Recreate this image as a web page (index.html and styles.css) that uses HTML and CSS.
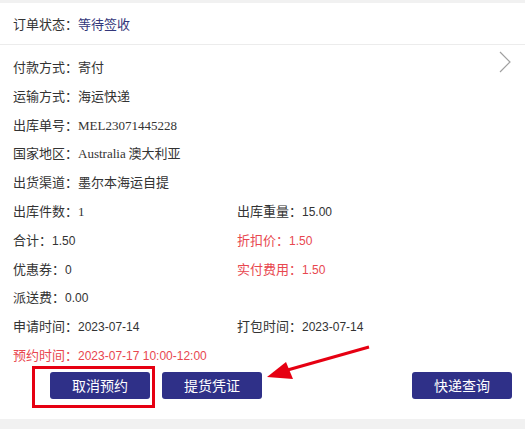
FILE: index.html
```html
<!DOCTYPE html>
<html lang="zh-CN">
<head>
  <meta charset="UTF-8">
  <meta name="viewport" content="width=device-width, initial-scale=1.0">
  <title>订单详情</title>
  <link rel="stylesheet" href="styles.css">
</head>
<body>

  <div class="card">
    <div class="status">订单状态：<span class="status-val">等待签收</span></div>

    <div class="detail">
      <svg class="chevron" width="14" height="22" viewBox="0 0 14 22">
        <polyline points="2,1 12,11 2,21" fill="none" stroke="#a0a0a0" stroke-width="1.2"/>
      </svg>

      <div class="row">付款方式：寄付</div>
      <div class="row">运输方式：海运快递</div>
      <div class="row">出库单号：<span class="serif">MEL23071445228</span></div>
      <div class="row">国家地区：<span class="serif">Australia</span> 澳大利亚</div>
      <div class="row">出货渠道：墨尔本海运自提</div>

      <div class="grid">
        <div class="row">出库件数：<span class="serif">1</span></div>
        <div class="row">出库重量：<span class="num">15.00</span></div>
        <div class="row">合计：<span class="num">1.50</span></div>
        <div class="row red">折扣价：<span class="num">1.50</span></div>
        <div class="row">优惠券：<span class="num">0</span></div>
        <div class="row red">实付费用：<span class="num">1.50</span></div>
        <div class="row">派送费：<span class="num">0.00</span></div>
        <div class="row"></div>
        <div class="row">申请时间：<span class="num">2023-07-14</span></div>
        <div class="row">打包时间：<span class="num">2023-07-14</span></div>
      </div>

      <div class="row red">预约时间：<span class="num">2023-07-17 10:00-12:00</span></div>
    </div>

    <div class="actions">
      <button class="btn">取消预约</button>
      <button class="btn">提货凭证</button>
      <button class="btn push">快递查询</button>
    </div>

    <div class="mark-box"></div>
    <svg class="mark-arrow" width="110" height="40" viewBox="0 0 110 40">
      <line x1="107" y1="2" x2="22" y2="26" stroke="#e60012" stroke-width="3"/>
      <polygon points="5,32 24,17 31,34" fill="#e60012"/>
    </svg>
  </div>

  <div class="gap"></div>

</body>
</html>
```

FILE: styles.css
```css
body {
  margin: 0;
  background-color: #f1f1f1;
  font-family: "Noto Sans CJK SC", "Noto Sans", sans-serif;
  font-size: 13px;
  color: #333;
}

.card {
  position: relative;
  margin-top: 3px;
  background-color: white;
  padding-bottom: 20px;
}

.status {
  height: 41px;
  line-height: 41px;
  padding: 0 13px;
  border-bottom: 1px solid #ececec;
}

.status-val {
  color: #33367a;
}

.detail {
  position: relative;
  padding: 8px 13px 0;
}

.chevron {
  position: absolute;
  right: 13px;
  top: 6px;
}

.row {
  height: 28.8px;
  line-height: 28.8px;
  white-space: nowrap;
}

.serif {
  font-family: "Liberation Serif", serif;
  font-size: 13px;
}

.num {
  font-family: "Liberation Sans", sans-serif;
  font-size: 12px;
}

.grid {
  display: grid;
  grid-template-columns: 224px 1fr;
}

.red {
  color: #e8474f;
}

.actions {
  display: flex;
  gap: 12px;
  padding: 2px 13px 0 50px;
}

.btn {
  width: 100px;
  height: 27px;
  border: none;
  border-radius: 3px;
  background-color: #2f3088;
  color: white;
  font-family: "Noto Sans CJK SC", sans-serif;
  font-size: 14px;
  padding: 0;
}

.push {
  margin-left: auto;
}

.mark-box {
  position: absolute;
  left: 32px;
  top: 363px;
  width: 117px;
  height: 36px;
  border: 3px solid #e60012;
}

.mark-arrow {
  position: absolute;
  left: 262px;
  top: 342px;
}

.gap {
  height: 10px;
}

body::after {
  content: "";
  display: block;
  height: 20px;
  background-color: white;
}
```
